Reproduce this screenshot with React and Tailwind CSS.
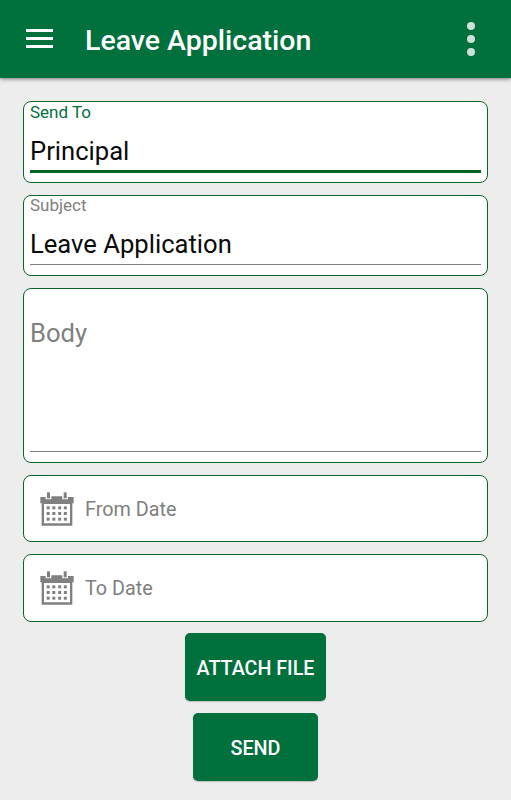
import React, { useState } from "react";

const DOT_COLUMNS = [20, 37, 54.5, 71.5];
const DOT_ROWS = [43, 60, 77];

function CalendarIcon() {
  return (
    <svg viewBox="0 0 102 102" className="w-[34px] h-[34px] shrink-0" fill="#808080">
      <path d="M1 15H17V22H34V13H67V22H84V15H101V34H1Z" />
      <rect x="21" y="1" width="9" height="18" />
      <rect x="71" y="1" width="9" height="18" />
      <path fillRule="evenodd" d="M5 33H97V101H5ZM12 36V94H90V36Z" />
      {DOT_ROWS.map((y) =>
        DOT_COLUMNS.map((x) => <rect key={`${x}-${y}`} x={x} y={y} width="9" height="9" />)
      )}
    </svg>
  );
}

function DateField({ label, className }) {
  return (
    <button
      className={`flex items-center w-full pl-4 bg-white border border-[#0b6427] rounded-[8px] text-left ${className}`}
    >
      <CalendarIcon />
      <span className="ml-[11px] pt-[2px] text-[19.8px] leading-6 text-[#808080]">{label}</span>
    </button>
  );
}

export default function App() {
  const [sendTo, setSendTo] = useState("Principal");
  const [subject, setSubject] = useState("Leave Application");
  const [body, setBody] = useState("");

  return (
    <div className="h-[800px] overflow-hidden bg-[#ededed] font-[Roboto,sans-serif]">
      {/* App bar */}
      <header className="flex items-center h-[78px] pl-[26px] pr-[36px] bg-[#00703c] shadow-[0_1px_4px_rgba(0,0,0,0.5)]">
        <button className="flex flex-col gap-[5px] pb-px" aria-label="Menu">
          <span className="w-[27px] h-[3px] bg-white" />
          <span className="w-[27px] h-[3px] bg-white" />
          <span className="w-[27px] h-[3px] bg-white" />
        </button>
        <h1 className="ml-[32px] mt-[4px] text-[28.5px] leading-8 font-medium text-white whitespace-nowrap">Leave Application</h1>
        <button className="ml-auto flex flex-col gap-[5.2px]" aria-label="More options">
          <span className="w-2 h-2 rounded-full bg-[#cce2d8]" />
          <span className="w-2 h-2 rounded-full bg-[#cce2d8]" />
          <span className="w-2 h-2 rounded-full bg-[#cce2d8]" />
        </button>
      </header>

      <main className="px-[23px] pt-[23px]">
        <div className="h-[82px] px-[6px] bg-white border border-[#0b6427] rounded-[8px]">
          <label className="block h-[20px] text-[17px] leading-[20px] text-[#00703c]">Send To</label>
          <input
            value={sendTo}
            onChange={(e) => setSendTo(e.target.value)}
            className="block w-full h-[51px] pt-[10px] border-b-[3px] border-[#00641e] text-[25.6px] text-[#0a0a0a] outline-none"
          />
        </div>

        <div className="h-[81px] mt-3 px-[6px] bg-white border border-[#0b6427] rounded-[8px]">
          <label className="block h-[20px] text-[17px] leading-[18px] text-[#808080]">Subject</label>
          <input
            value={subject}
            onChange={(e) => setSubject(e.target.value)}
            className="block w-full h-[49px] pt-[7px] border-b border-[#808080] text-[25.6px] text-[#0a0a0a] outline-none"
          />
        </div>

        <div className="h-[175px] mt-3 px-[6px] bg-white border border-[#0b6427] rounded-[8px]">
          <textarea
            value={body}
            onChange={(e) => setBody(e.target.value)}
            placeholder="Body"
            className="block w-full h-[163px] pt-[28px] border-b border-[#808080] text-[25.6px] leading-8 placeholder:text-[#808080] resize-none outline-none"
          />
        </div>

        <DateField label="From Date" className="h-[67px] mt-3" />
        <DateField label="To Date" className="h-[68px] mt-3" />

        <div className="flex flex-col items-center gap-3 mt-[11px]">
          <button className="w-[141px] h-[68px] pt-[3px] rounded-[5px] bg-[#00703c] text-[19.7px] font-medium text-white whitespace-nowrap shadow-[0_1px_1px_rgba(0,0,0,0.2)]">
            ATTACH FILE
          </button>
          <button className="w-[125px] h-[68px] pt-[3px] rounded-[5px] bg-[#00703c] text-[19.8px] font-medium text-white shadow-[0_1px_1px_rgba(0,0,0,0.2)]">
            SEND
          </button>
        </div>
      </main>
    </div>
  );
}
